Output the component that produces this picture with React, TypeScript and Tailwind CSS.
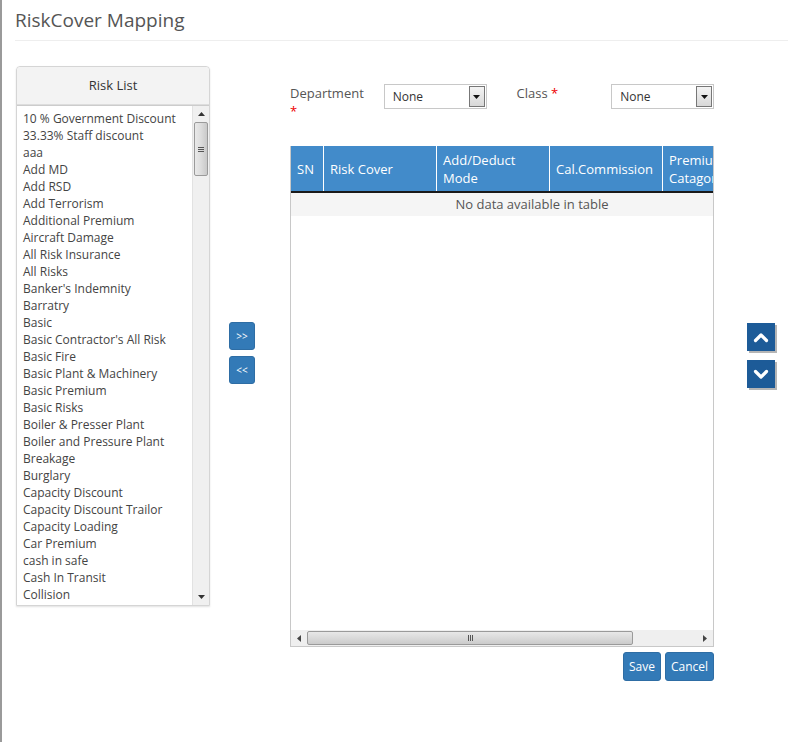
import React from 'react';

const risks = [
  '10 % Government Discount',
  '33.33% Staff discount',
  'aaa',
  'Add MD',
  'Add RSD',
  'Add Terrorism',
  'Additional Premium',
  'Aircraft Damage',
  'All Risk Insurance',
  'All Risks',
  "Banker's Indemnity",
  'Barratry',
  'Basic',
  "Basic Contractor's All Risk",
  'Basic Fire',
  'Basic Plant & Machinery',
  'Basic Premium',
  'Basic Risks',
  'Boiler & Presser Plant',
  'Boiler and Pressure Plant',
  'Breakage',
  'Burglary',
  'Capacity Discount',
  'Capacity Discount Trailor',
  'Capacity Loading',
  'Car Premium',
  'cash in safe',
  'Cash In Transit',
  'Collision',
];

const columns = [
  { label: 'SN', w: 'w-[32px]' },
  { label: 'Risk Cover', w: 'w-[113px]' },
  { label: 'Add/Deduct Mode', w: 'w-[113px]' },
  { label: 'Cal.Commission', w: 'w-[113px]' },
  { label: 'Premium Catagory', w: 'w-[113px]' },
];

function FakeSelect() {
  return (
    <div className="flex h-[25px] w-[103px] items-center border border-[#c8c8c8] bg-white pl-2 pr-[1px]">
      <span className="flex-1 text-[12px] text-[#333]">None</span>
      <div className="flex h-[21px] w-[16px] items-center justify-center border border-[#777] bg-gradient-to-b from-[#f4f4f4] to-[#d8d8d8]">
        <svg width="7" height="4" viewBox="0 0 7 4">
          <path d="M0 0h7L3.5 4z" fill="#111" />
        </svg>
      </div>
    </div>
  );
}

function Arrow({ dir }: { dir: 'up' | 'down' }) {
  return (
    <button className="flex h-[28px] w-[28px] items-center justify-center bg-[#1d5b98] shadow-[2px_2px_0_#b5b5b5]">
      <svg width="16" height="11" viewBox="0 0 16 11">
        <path
          d={dir === 'up' ? 'M2.5 8.5 8 3l5.5 5.5' : 'M2.5 2.5 8 8l5.5-5.5'}
          fill="none"
          stroke="#fff"
          strokeWidth="3.2"
          strokeLinecap="round"
          strokeLinejoin="round"
        />
      </svg>
    </button>
  );
}

export default function App() {
  return (
    <div className="min-h-[742px] border-l-2 border-[#9a9a9a] bg-white font-['Open_Sans',sans-serif] text-[#555]">
      <div className="ml-[13px] border-b border-[#eee] pb-[7px] pt-[8px]">
        <h1 className="text-[19px] leading-[25px] text-[#555]">RiskCover Mapping</h1>
      </div>

      <div className="mt-[25px] flex items-start">
        {/* Risk list panel */}
        <div className="ml-[14px] w-[194px] rounded-t-[4px] border border-[#d5d5d5] shadow-[0_1px_2px_rgba(0,0,0,0.12)]">
          <div className="flex h-[38px] items-center justify-center rounded-t-[4px] border-b border-[#ddd] bg-[#f3f3f3] text-[13px] text-[#333]">
            Risk List
          </div>
          <div className="flex h-[500px] border-t border-[#ccc] bg-white">
            <ul className="flex-1 overflow-hidden pl-[6px] pt-[4px] text-[12px] leading-[17px] text-[#444]">
              {risks.map((r) => (
                <li key={r} className="whitespace-nowrap">
                  {r}
                </li>
              ))}
            </ul>
            <div className="flex w-[17px] flex-col border-l border-[#e2e2e2] bg-[#f0f0f0]">
              <div className="flex h-[16px] items-center justify-center">
                <svg width="7" height="4" viewBox="0 0 7 4">
                  <path d="M0 4h7L3.5 0z" fill="#333" />
                </svg>
              </div>
              <div className="mx-[1px] flex h-[54px] items-center justify-center rounded-[2px] border border-[#9a9a9a] bg-gradient-to-r from-[#e9e9e9] via-[#dcdcdc] to-[#c9c9c9]">
                <div className="flex flex-col gap-[1px]">
                  <div className="h-[1px] w-[6px] bg-[#555]" />
                  <div className="h-[1px] w-[6px] bg-[#555]" />
                  <div className="h-[1px] w-[6px] bg-[#555]" />
                </div>
              </div>
              <div className="flex-1" />
              <div className="flex h-[16px] items-center justify-center">
                <svg width="7" height="4" viewBox="0 0 7 4">
                  <path d="M0 0h7L3.5 4z" fill="#333" />
                </svg>
              </div>
            </div>
          </div>
        </div>

        {/* Move buttons */}
        <div className="ml-[19px] mt-[256px] flex flex-col gap-[6px]">
          <button className="h-[28px] w-[26px] rounded-[3px] border border-[#2e6da4] bg-[#337ab7] text-[10px] text-white">
            &gt;&gt;
          </button>
          <button className="h-[28px] w-[26px] rounded-[3px] border border-[#2e6da4] bg-[#337ab7] text-[10px] text-white">
            &lt;&lt;
          </button>
        </div>

        {/* Mapping area */}
        <div className="ml-[35px] w-[424px]">
          <div className="mt-[18px] flex items-start text-[13px] leading-[18px]">
            <div className="w-[94px] text-[#555]">
              Department
              <div className="text-[#e00]">*</div>
            </div>
            <FakeSelect />
            <div className="ml-[30px] w-[95px]">
              Class <span className="text-[#e00]">*</span>
            </div>
            <FakeSelect />
          </div>

          <div className="mt-[26px] border border-t-0 border-[#c8c8c8]">
            <div className="flex h-[47px] overflow-hidden border-b-2 border-[#1a1a1a] bg-[#428bca] text-[13px] leading-[18px] text-white">
              {columns.map((c, i) => (
                <div
                  key={c.label}
                  className={`${c.w} flex shrink-0 items-center px-[6px] ${i > 0 ? 'border-l border-white' : ''}`}
                >
                  {c.label}
                </div>
              ))}
            </div>
            <div className="flex h-[23px] items-center justify-center bg-[#f5f5f5] pl-[60px] text-[13px] text-[#555]">
              No data available in table
            </div>
            <div className="h-[414px]" />
            <div className="flex h-[16px] items-center bg-[#efefef]">
              <div className="flex w-[16px] items-center justify-center">
                <svg width="4" height="7" viewBox="0 0 4 7">
                  <path d="M4 0v7L0 3.5z" fill="#444" />
                </svg>
              </div>
              <div className="flex h-[14px] w-[326px] items-center justify-center rounded-[2px] border border-[#9a9a9a] bg-gradient-to-b from-[#e8e8e8] to-[#cbcbcb]">
                <div className="flex gap-[1px]">
                  <div className="h-[6px] w-[1px] bg-[#555]" />
                  <div className="h-[6px] w-[1px] bg-[#555]" />
                  <div className="h-[6px] w-[1px] bg-[#555]" />
                </div>
              </div>
              <div className="flex-1" />
              <div className="flex w-[16px] items-center justify-center">
                <svg width="4" height="7" viewBox="0 0 4 7">
                  <path d="M0 0v7l4-3.5z" fill="#444" />
                </svg>
              </div>
            </div>
          </div>

          <div className="mt-[5px] flex justify-end gap-[4px]">
            <button className="h-[29px] w-[38px] rounded-[3px] border border-[#2e6da4] bg-[#337ab7] text-[12px] text-white">
              Save
            </button>
            <button className="h-[29px] w-[49px] rounded-[3px] border border-[#2e6da4] bg-[#337ab7] text-[12px] text-white">
              Cancel
            </button>
          </div>
        </div>

        {/* Order buttons */}
        <div className="ml-[33px] mt-[257px] flex flex-col gap-[9px]">
          <Arrow dir="up" />
          <Arrow dir="down" />
        </div>
      </div>
    </div>
  );
}
